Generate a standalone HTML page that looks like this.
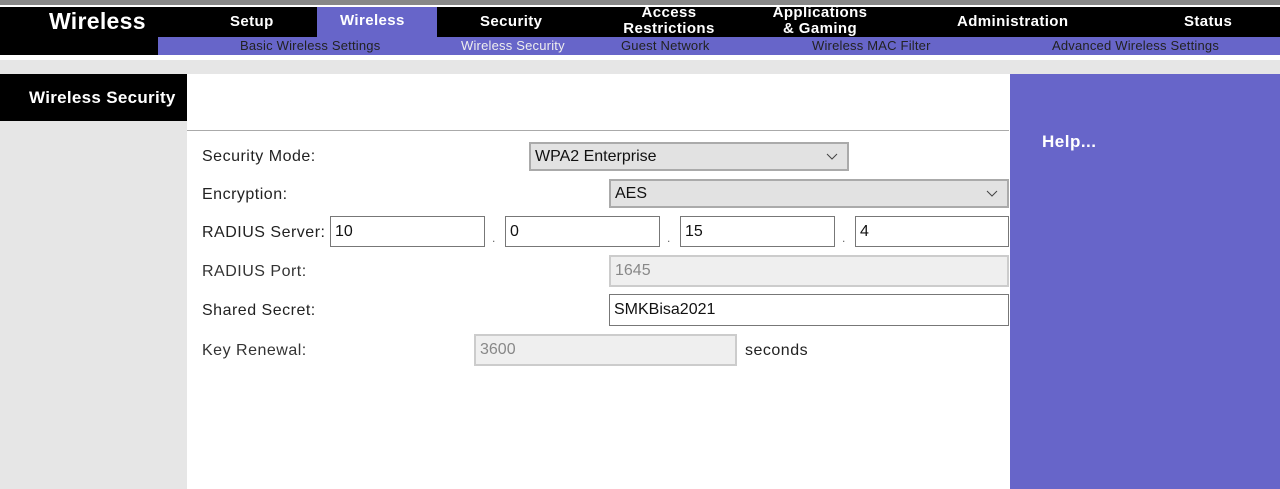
<!DOCTYPE html>
<html><head><style>
body{margin:0;width:1280px;height:489px;position:relative;overflow:hidden;background:#fff;font-family:"Liberation Sans",Arial,sans-serif}
.a{position:absolute}
.tab{position:absolute;color:#fff;font-weight:bold;font-size:15px;text-align:center;line-height:16px;letter-spacing:0.4px}
.sub{position:absolute;top:38px;font-size:13px;color:#222;line-height:16px;letter-spacing:0.2px}
.lbl{position:absolute;left:202px;font-size:16px;color:#222;letter-spacing:0.5px}
.box{position:absolute;box-sizing:border-box;border:1px solid #777;background:#fff;font-size:16px;color:#111;padding-left:4px}
.sel{position:absolute;box-sizing:border-box;border:2px solid #aaa;background:#e2e2e2;font-size:16px;color:#111;padding-left:4px}
.dis{position:absolute;box-sizing:border-box;border:2px solid #ccc;background:#efefef;font-size:16px;color:#888;padding-left:4px}
.dot{position:absolute;top:231px;font-size:12px;color:#666}
.chev{position:absolute;right:9px;top:9px}
</style></head><body>
<div class="a" style="left:0;top:0;width:1280px;height:7px;background:#fff;border-top:5px solid #888;box-sizing:border-box"></div>
<div class="a" style="left:0;top:7px;width:1280px;height:48px;background:#000"></div>
<div class="a" style="left:158px;top:37px;width:1122px;height:18px;background:#6765c9"></div>
<div class="a" style="left:317px;top:7px;width:120px;height:30px;background:#6765c9"></div>
<div class="a" style="left:49px;top:8px;font-size:23px;font-weight:bold;color:#fff;letter-spacing:0.3px">Wireless</div>
<div class="tab" style="left:230px;top:14px">Setup</div>
<div class="tab" style="left:340px;top:13px">Wireless</div>
<div class="tab" style="left:480px;top:14px">Security</div>
<div class="tab" style="left:609px;top:5px;width:120px">Access<br>Restrictions</div>
<div class="tab" style="left:760px;top:5px;width:120px">Applications<br>&amp; Gaming</div>
<div class="tab" style="left:957px;top:14px">Administration</div>
<div class="tab" style="left:1184px;top:14px">Status</div>
<div class="sub" style="left:240px">Basic Wireless Settings</div>
<div class="sub" style="left:461px;color:#eee">Wireless Security</div>
<div class="sub" style="left:621px">Guest Network</div>
<div class="sub" style="left:812px">Wireless MAC Filter</div>
<div class="sub" style="left:1052px">Advanced Wireless Settings</div>
<div class="a" style="left:0;top:60px;width:1280px;height:14px;background:#e6e6e6"></div>
<div class="a" style="left:0;top:74px;width:187px;height:415px;background:#e6e6e6"></div>
<div class="a" style="left:0;top:74px;width:187px;height:47px;background:#000"></div>
<div class="a" style="left:29px;top:88px;font-size:17px;font-weight:bold;color:#fff;letter-spacing:0.3px">Wireless Security</div>
<div class="a" style="left:1010px;top:74px;width:270px;height:415px;background:#6765c9"></div>
<div class="a" style="left:1042px;top:132px;font-size:17px;font-weight:bold;color:#fff;letter-spacing:0.5px">Help...</div>
<div class="a" style="left:187px;top:130px;width:822px;height:1px;background:#aaa"></div>
<div class="lbl" style="top:148px">Security Mode:</div>
<div class="lbl" style="top:186px">Encryption:</div>
<div class="lbl" style="top:224px">RADIUS Server:</div>
<div class="lbl" style="top:263px;color:#333">RADIUS Port:</div>
<div class="lbl" style="top:302px">Shared Secret:</div>
<div class="lbl" style="top:342px;color:#333">Key Renewal:</div>
<div class="sel" style="left:529px;top:142px;width:320px;height:29px;line-height:25px">WPA2 Enterprise<svg class="chev" width="12" height="7"><path d="M1 1L6 6L11 1" fill="none" stroke="#444" stroke-width="1"/></svg></div>
<div class="sel" style="left:609px;top:179px;width:400px;height:29px;line-height:25px">AES<svg class="chev" width="12" height="7"><path d="M1 1L6 6L11 1" fill="none" stroke="#444" stroke-width="1"/></svg></div>
<div class="box" style="left:330px;top:216px;width:155px;height:31px;line-height:29px">10</div>
<div class="box" style="left:505px;top:216px;width:155px;height:31px;line-height:29px">0</div>
<div class="box" style="left:680px;top:216px;width:155px;height:31px;line-height:29px">15</div>
<div class="box" style="left:855px;top:216px;width:154px;height:31px;line-height:29px">4</div>
<div class="dot" style="left:492px">.</div><div class="dot" style="left:667px">.</div><div class="dot" style="left:842px">.</div>
<div class="dis" style="left:609px;top:255px;width:400px;height:32px;line-height:28px">1645</div>
<div class="box" style="left:609px;top:294px;width:400px;height:32px;line-height:30px">SMKBisa2021</div>
<div class="dis" style="left:474px;top:334px;width:263px;height:32px;line-height:28px">3600</div>
<div class="a" style="left:745px;top:342px;font-size:16px;color:#222;letter-spacing:0.5px">seconds</div>
</body></html>
